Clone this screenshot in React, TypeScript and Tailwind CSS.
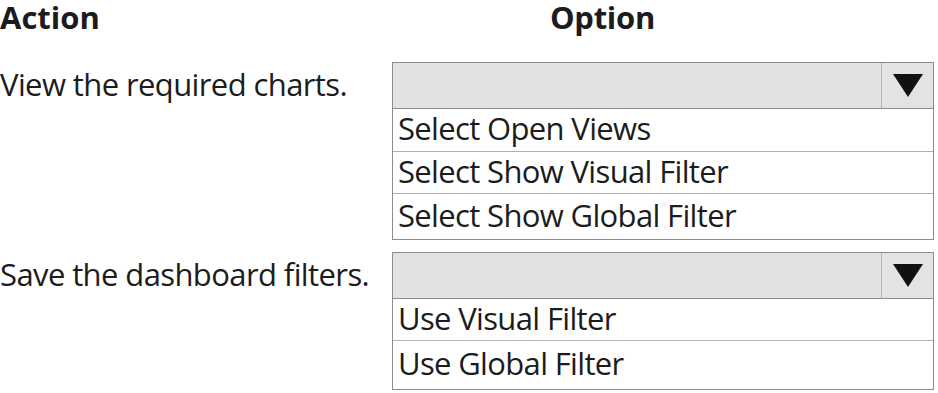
import React from "react";

function Arrow() {
  return (
    <div className="w-[52px] h-full border-l border-[#b5b5b5] flex items-center justify-center bg-[#e3e3e3]">
      <svg width="30" height="23" viewBox="0 0 30 23">
        <polygon points="0,0 30,0 15,23" fill="#111" />
      </svg>
    </div>
  );
}

function Dropdown({ options, rowHeights }: { options: string[]; rowHeights: number[] }) {
  return (
    <div className="w-[542px] border border-[#8c8c8c] flex flex-col">
      <div className="h-[46px] bg-[#e2e2e2] flex justify-end border-b border-[#8c8c8c]">
        <Arrow />
      </div>
      {options.map((o, i) => (
        <div
          key={o}
          style={{ height: rowHeights[i] }}
          className={"flex items-center pl-[5px] text-[31px] tracking-[-0.65px] leading-[40px] " + (i < options.length - 1 ? "border-b border-[#b0b0b0]" : "")}
        >
          <span className="-mt-[4px]">{o}</span>
        </div>
      ))}
    </div>
  );
}

export default function App() {
  return (
    <div className="w-[938px] h-[393px] bg-white text-[#1c1c1c] overflow-hidden font-['Open_Sans',sans-serif]">
      <div className="flex h-[62px] pt-[1px]">
        <div className="w-[392px] text-[31px] font-bold leading-[32px]">Action</div>
        <div className="pl-[158px] text-[31px] font-bold tracking-[-0.3px] leading-[32px]">Option</div>
      </div>
      <div className="flex">
        <div className="w-[392px] h-[46px] flex items-center text-[31px] tracking-[-0.6px] leading-[40px]">
          <span className="-mt-[3px]">View the required charts.</span>
        </div>
        <Dropdown options={["Select Open Views", "Select Show Visual Filter", "Select Show Global Filter"]} rowHeights={[43, 42, 45]} />
      </div>
      <div className="flex mt-[12px]">
        <div className="w-[392px] h-[46px] flex items-center text-[31px] tracking-[-0.6px] leading-[40px]">
          <span className="-mt-[3px]">Save the dashboard filters.</span>
        </div>
        <Dropdown options={["Use Visual Filter", "Use Global Filter"]} rowHeights={[42, 48]} />
      </div>
    </div>
  );
}
